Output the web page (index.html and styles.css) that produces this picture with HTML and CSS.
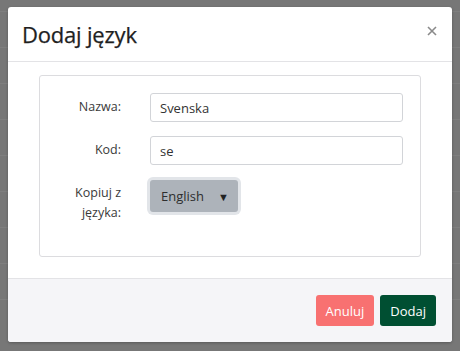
FILE: index.html
```html
<!DOCTYPE html>
<html lang="pl">
    <head>
        <meta charset="UTF-8">
        <title>Dodaj język</title>
        <link rel="stylesheet" href="styles.css">
    </head>
    <body>
        <div class="page-behind">
            <div class="row"><span></span><span></span><span></span></div>
            <div class="row"><span></span><span></span><span></span></div>
            <div class="row"><span></span><span></span><span></span></div>
            <div class="row"><span></span><span></span><span></span></div>
            <div class="row"><span></span><span></span><span></span></div>
            <div class="row"><span></span><span></span><span></span></div>
            <div class="row"><span></span><span></span><span></span></div>
            <div class="row"><span></span><span></span><span></span></div>
            <div class="row"><span></span><span></span><span></span></div>
        </div>

        <div class="overlay">
            <div class="modal">
                <header class="modal-header">
                    <h2>Dodaj język</h2>
                    <button class="close" type="button">
                        <svg width="10" height="10" viewBox="0 0 10 10">
                            <path d="M1 1 L9 9 M9 1 L1 9" stroke="#8a8a8a" stroke-width="1.6" fill="none"/>
                        </svg>
                    </button>
                </header>

                <section class="modal-body">
                    <div class="form-box">
                        <label class="form-label" for="name">Nazwa:</label>
                        <input class="form-input" type="text" id="name" value="Svenska">

                        <label class="form-label" for="code">Kod:</label>
                        <input class="form-input" type="text" id="code" value="se">

                        <label class="form-label" for="copy">Kopiuj z języka:</label>
                        <div class="select-cell">
                            <div class="select" id="copy">
                                <span>English</span>
                                <span class="caret">&#9660;</span>
                            </div>
                        </div>
                    </div>
                </section>

                <footer class="modal-footer">
                    <button type="button" class="btn btn-cancel">Anuluj</button>
                    <button type="submit" class="btn btn-add">Dodaj</button>
                </footer>
            </div>
        </div>
    </body>
</html>
```

FILE: styles.css
```css
body {
    margin: 0;
    width: 460px;
    height: 351px;
    overflow: hidden;
    background-color: #777777;
    font-family: 'Open Sans', 'Noto Sans', sans-serif;
    color: #333333;
}

.page-behind {
    padding-top: 11px;
}

.page-behind .row {
    display: flex;
    height: 35px;
    border-top: 1px solid #7f7f7f;
}

.page-behind .row span {
    border-left: 1px solid #6f6f6f;
}

.page-behind .row span:nth-child(1) {
    margin-left: 12px;
    width: 184px;
}

.page-behind .row span:nth-child(2) {
    width: 187px;
}

.overlay {
    position: absolute;
    top: 0;
    left: 0;
    width: 460px;
    height: 351px;
    display: flex;
    justify-content: center;
    padding-top: 7px;
    box-sizing: border-box;
}

.modal {
    width: 444px;
    height: 335px;
    background-color: white;
    border-radius: 3px;
    box-shadow: 0 1px 3px rgba(0, 0, 0, 0.25);
    display: flex;
    flex-direction: column;
    overflow: hidden;
}

.modal-header {
    height: 54px;
    display: flex;
    align-items: center;
    justify-content: space-between;
    padding: 0 14px 0 14px;
    border-bottom: 1px solid #e3e3e6;
}

.modal-header h2 {
    margin: 0;
    font-size: 22px;
    font-weight: 500;
    color: #1f1f1f;
    letter-spacing: -0.2px;
    -webkit-text-stroke: 0.25px #1f1f1f;
}

.close {
    border: none;
    background: none;
    padding: 0;
    width: 12px;
    height: 12px;
    display: flex;
    align-items: center;
    justify-content: center;
    margin-top: -6px;
}

.modal-body {
    flex: 1;
    padding: 13px 31px 0 31px;
}

.form-box {
    height: 182px;
    box-sizing: border-box;
    border: 1px solid #dcdcdf;
    border-radius: 3px;
    padding: 17px 17px 0 0;
    display: grid;
    grid-template-columns: 81px 1fr;
    column-gap: 29px;
    row-gap: 14px;
    align-content: start;
}

.form-label {
    font-size: 12.5px;
    line-height: 20px;
    text-align: right;
    padding-top: 4px;
    color: #3a3a3a;
}

.form-input {
    height: 29px;
    box-sizing: border-box;
    border: 1px solid #d2d4d8;
    border-radius: 3px;
    padding: 0 9px;
    font-family: 'Open Sans', 'Noto Sans', sans-serif;
    font-size: 13px;
    color: #333333;
    outline: none;
}

.select-cell {
    padding-top: 1px;
}

.select {
    width: 88px;
    height: 32px;
    box-sizing: border-box;
    background-color: #adb3ba;
    border-radius: 3px;
    box-shadow: 0 0 0 3px #e2e5e9;
    display: flex;
    align-items: center;
    justify-content: space-between;
    padding: 0 9px 0 11px;
    font-size: 13px;
    color: #2e2e2e;
}

.caret {
    font-size: 11px;
    color: #222;
}

.modal-footer {
    height: 64px;
    box-sizing: border-box;
    background-color: #f5f5f8;
    border-top: 1px solid #e3e3e6;
    display: flex;
    align-items: flex-start;
    justify-content: flex-end;
    gap: 6px;
    padding: 16px 16px 0 0;
}

.btn {
    height: 31px;
    border: none;
    border-radius: 3px;
    padding: 0 10px;
    font-family: 'Open Sans', 'Noto Sans', sans-serif;
    font-size: 13px;
    color: white;
}

.btn-cancel {
    background-color: #f87171;
}

.btn-add {
    background-color: #004f32;
}
```
